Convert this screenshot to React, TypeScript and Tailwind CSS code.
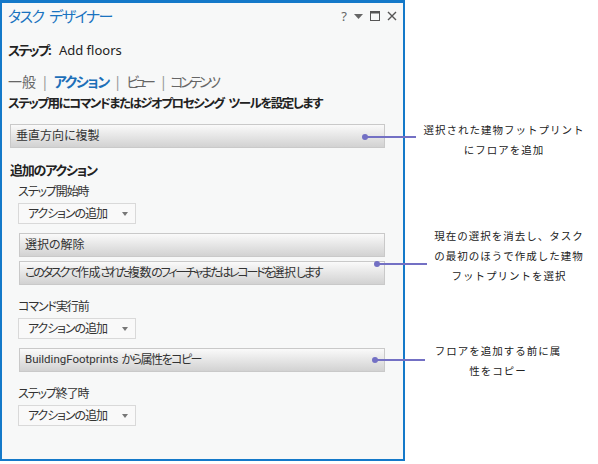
import React from "react";

const jp = "font-['Noto_Sans','Noto_Sans_CJK_JP',sans-serif] [font-feature-settings:'palt']";

function ActionButton({
  children,
  mt,
  ml = "ml-[17px]",
}: {
  children: React.ReactNode;
  mt: string;
  ml?: string;
}) {
  return (
    <div
      className={`${mt} ${ml} mr-[18px] h-[24px] flex items-center pl-[4px] border border-[#c9c9c9] bg-gradient-to-b from-[#fafafa] to-[#d2d2d2] text-[12px] text-[#333] whitespace-nowrap`}
    >
      {children}
    </div>
  );
}

function AddDropdown() {
  return (
    <div className="mt-[2px] ml-[16px] w-[118px] h-[21px] flex items-center justify-between pl-[9px] pr-[7px] border border-[#d9d9d9] bg-[#f9f9f9] text-[12px] text-[#333]">
      <span className="tracking-[-1.1px]">アクションの追加</span>
      <svg width="6" height="4" viewBox="0 0 6 4">
        <path d="M0 0h6L3 4z" fill="#777" />
      </svg>
    </div>
  );
}

function SubLabel({ children, mt }: { children: React.ReactNode; mt: string }) {
  return (
    <div className={`${mt} h-[18px] flex items-center pl-[16px] text-[12px] tracking-[-1.1px] text-[#333]`}>
      {children}
    </div>
  );
}

function Callout({ x, y, to }: { x: number; y: number; to: number }) {
  return (
    <>
      <div
        className="absolute h-[2px] bg-[#7370c4]"
        style={{ left: x, top: y - 1, width: to - x }}
      />
      <div
        className="absolute w-[6px] h-[6px] rounded-full bg-[#7370c4]"
        style={{ left: x - 3, top: y - 3 }}
      />
    </>
  );
}

function Note({ left, top, lines }: { left: number; top: number; lines: string[] }) {
  return (
    <div
      className="absolute w-[170px] text-center text-[10.5px] leading-[20px] tracking-[1px] text-[#222] font-['Noto_Sans_CJK_JP',sans-serif] [font-feature-settings:normal]"
      style={{ left, top }}
    >
      {lines.map((l) => (
        <div key={l}>{l}</div>
      ))}
    </div>
  );
}

// kana runs are set tighter than kanji runs
function Kana({ children }: { children: React.ReactNode }) {
  return <span className="tracking-[-2.2px]">{children}</span>;
}
function Kanji({ children }: { children: React.ReactNode }) {
  return <span className="tracking-[-0.3px]">{children}</span>;
}

export default function App() {
  return (
    <div className={`relative w-[598px] h-[464px] bg-white ${jp}`}>
      <div className="w-[405px] h-[461px] flex flex-col border-t-[3px] border-l-[2px] border-r-[2px] border-b-[2px] border-[#1479c9] bg-[#f7f8f8]">
        {/* title bar */}
        <div className="h-[26px] flex items-center justify-between pl-[6px] pr-[6px]">
          <span className="flex text-[15px] tracking-[-1.6px] text-[#1a73c0]">
            <span>タスク</span>
            <span className="ml-[6px]">デザイナー</span>
          </span>
          <div className="flex items-center gap-[7px] text-[#666]">
            <span className="text-[13px] leading-none">?</span>
            <svg width="9" height="5" viewBox="0 0 9 5" className="mt-[1px]">
              <path d="M0 0h9L4.5 5z" fill="#666" />
            </svg>
            <svg width="10" height="10" viewBox="0 0 10 10">
              <rect x="0.5" y="0.5" width="9" height="9" fill="none" stroke="#555" />
              <rect x="0.5" y="0.5" width="9" height="2" fill="#555" />
            </svg>
            <svg width="10" height="10" viewBox="0 0 10 10">
              <path d="M1 1l8 8M9 1l-8 8" stroke="#555" strokeWidth="1.4" />
            </svg>
          </div>
        </div>

        <div className="mt-[12px] h-[20px] flex items-center pl-[6px] text-[13px] text-[#222]">
          <span className="font-bold tracking-[-1.8px]">ステップ:</span>
          <span className="ml-[9px]">Add floors</span>
        </div>

        <div className="mt-[10px] h-[20px] flex items-center pl-[6px] text-[14px] text-[#666]">
          <span>一般</span>
          <span className="mx-[5px] text-[#999]">|</span>
          <span className="font-bold tracking-[-1.4px] text-[#1c6fb8]">アクション</span>
          <span className="mx-[5px] text-[#999]">|</span>
          <span className="tracking-[-4.5px]">ビュー</span>
          <span className="ml-[8px] mr-[3px] text-[#999]">|</span>
          <span className="tracking-[-3.2px]">コンテンツ</span>
        </div>

        <div className="mt-[4px] h-[18px] flex items-center pl-[6px] text-[12.5px] tracking-[-1.5px] font-bold text-[#222] whitespace-nowrap">
          <span>ステップ用にコマンドまたはジオプロセシング</span>
          <span className="ml-[5px]">ツールを設定します</span>
        </div>

        <ActionButton mt="mt-[11px]" ml="ml-[8px]">
          <span className="ml-[1px]">垂直方向に複製</span>
        </ActionButton>

        <div className="mt-[14px] h-[18px] flex items-center pl-[8px] text-[13px] tracking-[-1.2px] font-bold text-[#222]">
          追加のアクション
        </div>

        <SubLabel mt="mt-[3px]">ステップ開始時</SubLabel>
        <AddDropdown />

        <ActionButton mt="mt-[9px]">
          <span className="ml-[1px]">選択の解除</span>
        </ActionButton>
        <ActionButton mt="mt-[4px]">
          <span className="ml-[1px]">
            <Kana>このタスクで</Kana>
            <Kanji>作成</Kanji>
            <Kana>された</Kana>
            <Kanji>複数</Kanji>
            <Kana>のフィーチャまたはレコードを</Kana>
            <Kanji>選択</Kanji>
            <Kana>します</Kana>
          </span>
        </ActionButton>

        <SubLabel mt="mt-[13px]">コマンド実行前</SubLabel>
        <AddDropdown />

        <ActionButton mt="mt-[9px]">
          <span className="ml-[1px] font-['Roboto',sans-serif] text-[11.5px]">BuildingFootprints</span>
          <span className="ml-[3px] tracking-[-1.5px]">から属性をコピー</span>
        </ActionButton>

        <SubLabel mt="mt-[13px]">ステップ終了時</SubLabel>
        <AddDropdown />
      </div>

      <Callout x={365} y={137} to={416} />
      <Callout x={377} y={264} to={427} />
      <Callout x={375} y={360} to={425} />

      <Note left={419} top={120} lines={["選択された建物フットプリント", "にフロアを追加"]} />
      <Note left={424} top={226} lines={["現在の選択を消去し、タスク", "の最初のほうで作成した建物", "フットプリントを選択"]} />
      <Note left={413} top={341} lines={["フロアを追加する前に属", "性をコピー"]} />
    </div>
  );
}
